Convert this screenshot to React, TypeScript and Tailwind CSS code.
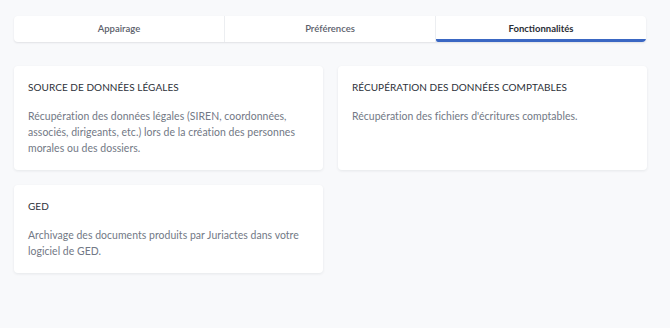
import React from "react";

const tabs = ["Appairage", "Préférences", "Fonctionnalités"];

function Card({ title, children }: { title: string; children: React.ReactNode }) {
  return (
    <div className="bg-white rounded-[4px] shadow-[0_1px_3px_rgba(15,23,42,0.08)] px-[14px] pt-[13px] pb-[14px]">
      <div className="text-[10px] leading-[16px] text-[#2d3139] tracking-[0.05px]">{title}</div>
      <div className="mt-[13px] text-[10.45px] leading-[16px] text-[#727885] tracking-[0.05px]">{children}</div>
    </div>
  );
}

export default function App() {
  return (
    <div
      className="w-[670px] h-[328px] bg-[#f8f9fb] px-[14px] pt-[16px]"
      style={{ fontFamily: "Lato, 'Noto Sans', sans-serif" }}
    >
      <div className="flex h-[26px] bg-white rounded-[4px] shadow-[0_1px_2px_rgba(15,23,42,0.10)] w-[632px] overflow-hidden">
        {tabs.map((t, i) => (
          <div
            key={t}
            className={
              "flex-1 flex items-center justify-center text-[9.5px] relative " +
              (i < 2 ? "border-r border-[#eceef1] " : "") +
              (i === 2 ? "text-[#2a2e36] font-bold" : "text-[#5b606b] font-semibold")
            }
          >
            {t}
            {i === 2 && (
              <div className="absolute left-0 right-0 bottom-0 h-[3px] bg-[#3a67c3] rounded-b-[2px]" />
            )}
          </div>
        ))}
      </div>

      <div className="grid grid-cols-2 gap-x-[15px] gap-y-[15px] mt-[24px] w-[633px]">
        <Card title="SOURCE DE DONNÉES LÉGALES">
          Récupération des données légales (SIREN, coordonnées, associés, dirigeants, etc.) lors de la création des personnes morales ou des dossiers.
        </Card>
        <Card title="RÉCUPÉRATION DES DONNÉES COMPTABLES">
          Récupération des fichiers d'écritures comptables.
        </Card>
        <Card title="GED">
          Archivage des documents produits par Juriactes dans votre logiciel de GED.
        </Card>
      </div>
    </div>
  );
}
